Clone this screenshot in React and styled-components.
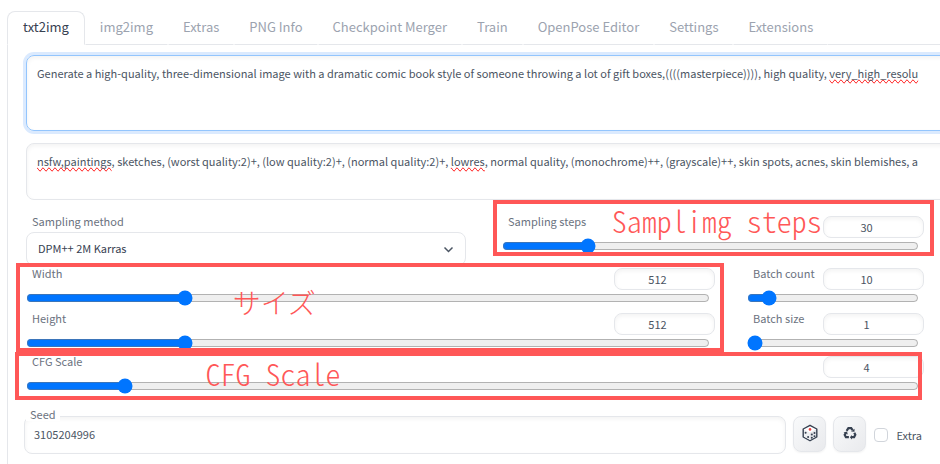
import React, {useState} from 'react';
import styled, {createGlobalStyle} from 'styled-components';

const GlobalStyle = createGlobalStyle`
    * {
        box-sizing: border-box;
    }

    body {
        margin: 0;
        background: #fff;
        color: #4b5563;
        font-family: "Noto Sans CJK JP", "Noto Sans", sans-serif;
        font-size: 11px;
        line-height: 16px;
        overflow: hidden;
    }

    button, input, select, textarea {
        font: inherit;
        color: inherit;
    }
`

const Page = styled.main`
    min-height: 100vh;
    padding: 11px 0 0 7px;
    display: flex;
    flex-direction: column;
`

const Tabs = styled.nav`
    display: flex;
    flex-shrink: 0;
    height: 34px;

    &:after {
        content: '';
        flex: 1;
        border-bottom: 1px solid #e5e7eb;
    }
`

const Tab = styled.button`
    padding: 0 14px 2px;
    border: 1px solid transparent;
    border-bottom-color: ${props => props.$active ? 'transparent' : '#e5e7eb'};
    background: none;
    color: #9ca3af;
    font-size: 13px;
    line-height: 20px;
    white-space: nowrap;

    ${props => props.$active && `
        padding: 0 15px 2px;
        border-color: #e5e7eb #e5e7eb transparent;
        border-radius: 8px 8px 0 0;
        color: #374151;
    `}
`

const Panel = styled.section`
    flex: 1;
    display: flex;
    flex-direction: column;
    padding: 10px 16px 10px 18px;
    border-left: 1px solid #e5e7eb;
`

const Prompts = styled.div`
    display: grid;
    gap: 12px;
    margin-right: -32px;
`

const PromptBox = styled.div`
    display: grid;
    height: ${props => props.$tall ? 76 : 57}px;
    border: 1px solid ${props => props.$focused ? '#93c5fd' : '#e5e7eb'};
    border-radius: 8px;
    box-shadow: ${props => props.$focused ? '0 0 0 3px #dbeafe, ' : ''}inset 0 2px 4px rgba(0, 0, 0, .05);

    > * {
        grid-area: 1 / 1;
        min-width: 0;
        padding: 9px 10px;
        white-space: pre;
        overflow: hidden;
    }
`

const PromptText = styled.textarea`
    border: 0;
    outline: 0;
    background: none;
    resize: none;
`

const Spelling = styled.div`
    color: transparent;

    mark {
        background: none;
        color: transparent;
        text-decoration-line: spelling-error;
    }
`

const Row = styled.div`
    display: grid;
    grid-template-columns: ${props => props.$columns};
    column-gap: ${props => props.$gap}px;
    align-items: start;
    margin-top: ${props => props.$top}px;
`

const Stack = styled.div`
    display: grid;
    gap: 7px;
`

const Marked = styled.div`
    position: relative;
`

const Frame = styled.div`
    position: absolute;
    inset: ${props => props.$inset};
    border: 4px solid #ff5757;
    pointer-events: none;
`

const Note = styled.span`
    position: absolute;
    top: ${props => props.$top}px;
    left: ${props => props.$left};
    color: #ff5757;
    font-size: ${props => props.$small ? 28 : 30}px;
    font-weight: 300;
    line-height: 32px;
    font-feature-settings: "hwid";
    white-space: pre;
    pointer-events: none;
`

const Label = styled.label`
    padding-left: 6px;
    color: #6b7280;
    line-height: 10px;
`

const SelectField = styled.div`
    display: grid;
    gap: 6px;
`

const SelectBox = styled.div`
    display: grid;
    align-items: center;

    > * {
        grid-area: 1 / 1;
    }

    svg {
        justify-self: end;
        margin-right: 11px;
        pointer-events: none;
    }
`

const Select = styled.select`
    width: 100%;
    height: 34px;
    padding: 0 11px 2px;
    border: 1px solid #e5e7eb;
    border-radius: 8px;
    background: #fff;
    color: #374151;
    appearance: none;
`

const SliderField = styled.div`
    display: grid;
`

const SliderHead = styled.div`
    display: flex;
    justify-content: space-between;
    align-items: flex-start;
`

const NumberInput = styled.input`
    width: 101px;
    height: 22px;
    padding: 0 14px 1px 0;
    border: 1px solid #e5e7eb;
    border-radius: 8px;
    box-shadow: inset 0 2px 4px rgba(0, 0, 0, .05);
    background: #fff;
    text-align: center;
    appearance: textfield;

    &::-webkit-inner-spin-button {
        display: none;
    }
`

const Range = styled.input`
    height: 16px;
    min-width: 0;
    margin: 0 5px 0 0;
    accent-color: #0075ff;
`

const SeedRow = styled.div`
    display: flex;
    align-items: flex-start;
    gap: 7px;
    margin: 22px 0 0 -2px;
`

const SeedField = styled.div`
    position: relative;
    flex: 1;
    display: grid;

    label {
        position: absolute;
        top: -9px;
        left: 2px;
        padding: 0 4px;
        background: #fff;
        color: #6b7280;
        line-height: 14px;
    }
`

const SeedInput = styled.input`
    height: 38px;
    padding: 0 9px 2px;
    border: 1px solid #e5e7eb;
    border-radius: 8px;
    box-shadow: inset 0 2px 4px rgba(0, 0, 0, .05);
`

const ToolButton = styled.button`
    display: grid;
    place-items: center;
    width: 33px;
    height: 36px;
    padding: 0 0 2px;
    border: 1px solid #e5e7eb;
    border-radius: 8px;
    background: linear-gradient(to bottom right, #f9fafb, #e9eaed);
    box-shadow: 0 1px 2px rgba(0, 0, 0, .05);
`

const Extra = styled.label`
    display: flex;
    align-items: center;
    gap: 8px;
    height: 38px;
    padding: 0 2px 0 1px;
`

const Checkbox = styled.input`
    width: 14px;
    height: 14px;
    margin: 0;
    border: 1px solid #d1d5db;
    border-radius: 4px;
    background: #fff;
    appearance: none;

    &:checked {
        background: #0075ff;
    }
`

const tabs = ['txt2img', 'img2img', 'Extras', 'PNG Info', 'Checkpoint Merger', 'Train', 'OpenPose Editor', 'Settings', 'Extensions']

const promptText = 'Generate a high-quality, three-dimensional image with a dramatic comic book style of someone throwing a lot of gift boxes,((((masterpiece)))), high quality, very_high_resolu'
const negativeText = 'nsfw,paintings, sketches, (worst quality:2)+, (low quality:2)+, (normal quality:2)+, lowres, normal quality, (monochrome)++, (grayscale)++, skin spots, acnes, skin blemishes, a'

const misspelled = /(nsfw,paintings|lowres|very_high_resolu)/

const Chevron = () => (
    <svg width="13" height="13" viewBox="0 0 13 13" fill="none" stroke="#4b5563" strokeWidth="1.5">
        <path d="M2.5 4.5 6.5 8.5 10.5 4.5"/>
    </svg>
)

const Dice = () => (
    <svg width="16" height="18" viewBox="0 0 16 18">
        <path d="M8 1.3 14.8 5V13L8 16.7 1.2 13V5Z" fill="#fff" stroke="#374151" strokeWidth="1.4" strokeLinejoin="round"/>
        <path d="M2 5.6 8 8.8V15.9L2 12.6Z" fill="#eef0f2"/>
        <path d="M14 5.6 8 8.8V15.9L14 12.6Z" fill="#e2e4e8"/>
        <circle cx="8" cy="5.4" r="1.3" fill="#ef4444"/>
        <g fill="#374151">
            <circle cx="3.6" cy="8.7" r="1"/>
            <circle cx="6.1" cy="13" r="1"/>
            <circle cx="9.8" cy="10.6" r="1"/>
            <circle cx="12.5" cy="9" r="1"/>
            <circle cx="9.8" cy="13.8" r="1"/>
            <circle cx="12.5" cy="12.2" r="1"/>
        </g>
    </svg>
)

const Recycle = () => (
    <svg width="14" height="14" viewBox="0 0 14 14" fill="none" stroke="#374151" strokeWidth="2.2">
        <path d="M3.6 4.8 5.4 2.1H8.2L9.6 4.2"/>
        <path d="M11.3 6.8 12.3 8.8 11.1 11.2H8.6"/>
        <path d="M5.9 11.2H2.9L1.7 8.9 2.8 7"/>
        <path d="M11.5 2.7V5.8L8 5.4ZM9 9V13.4L6.8 11.2ZM.5 6.6 4 5.5 4.8 8.6Z" fill="#374151" stroke="none"/>
    </svg>
)

const Prompt = ({name, text, tall, focused}) => {

    const [value, setValue] = useState(text)

    return (
        <PromptBox $tall={tall} $focused={focused}>
            <Spelling aria-hidden="true">
                {value.split(misspelled).map((part, i) => i % 2 ? <mark key={i}>{part}</mark> : part)}
            </Spelling>
            <PromptText aria-label={name} spellCheck={false} value={value} onChange={e => setValue(e.target.value)}/>
        </PromptBox>
    )
}

const Slider = ({id, label, start, min, max, step = 1}) => {

    const [value, setValue] = useState(start)
    const change = e => setValue(e.target.value)

    return (
        <SliderField>
            <SliderHead>
                <Label htmlFor={id}>{label}</Label>
                <NumberInput id={id} type="number" min={min} max={max} step={step} value={value} onChange={change}/>
            </SliderHead>
            <Range type="range" aria-label={label} min={min} max={max} step={step} value={value} onChange={change}/>
        </SliderField>
    )
}

const App = () => {

    const [active, setActive] = useState('txt2img')

    return (
        <Page>
            <GlobalStyle/>
            <Tabs>
                {tabs.map(tab => (
                    <Tab key={tab} type="button" $active={tab === active} onClick={() => setActive(tab)}>{tab}</Tab>
                ))}
            </Tabs>
            <Panel>
                <Prompts>
                    <Prompt name="Prompt" text={promptText} tall focused/>
                    <Prompt name="Negative prompt" text={negativeText}/>
                </Prompts>
                <Row $columns="440fr 422fr" $gap={36} $top={16}>
                    <SelectField>
                        <Label htmlFor="sampler">Sampling method</Label>
                        <SelectBox>
                            <Select id="sampler">
                                <option>DPM++ 2M Karras</option>
                                <option>Euler a</option>
                            </Select>
                            <Chevron/>
                        </SelectBox>
                    </SelectField>
                    <Marked>
                        <Slider id="steps" label="Sampling steps" start={30} min={1} max={150}/>
                        <Frame $inset="-16px -10px -2px -9px"/>
                        <Note $top={-12} $left="26%">Samplimg steps</Note>
                    </Marked>
                </Row>
                <Row $columns="689fr 177fr" $gap={32} $top={2}>
                    <Marked>
                        <Stack>
                            <Slider id="width" label="Width" start={512} min={64} max={2048} step={8}/>
                            <Slider id="height" label="Height" start={512} min={64} max={2048} step={8}/>
                        </Stack>
                        <Frame $inset="-5px -9px -1px -10px"/>
                        <Note $top={18} $left="30%" $small>サイズ</Note>
                    </Marked>
                    <Stack>
                        <Slider id="batch-count" label="Batch count" start={10} min={1} max={100}/>
                        <Slider id="batch-size" label="Batch size" start={1} min={1} max={8}/>
                    </Stack>
                </Row>
                <Row $columns="1fr" $gap={0} $top={5}>
                    <Marked>
                        <Slider id="cfg" label="CFG Scale" start={4} min={1} max={30}/>
                        <Frame $inset="-4px 2px -6px -11px"/>
                        <Note $top={1} $left="20%">CFG Scale</Note>
                    </Marked>
                </Row>
                <SeedRow>
                    <SeedField>
                        <SeedInput id="seed" type="text" defaultValue="3105204996"/>
                        <label htmlFor="seed">Seed</label>
                    </SeedField>
                    <ToolButton type="button" aria-label="Random seed"><Dice/></ToolButton>
                    <ToolButton type="button" aria-label="Reuse seed"><Recycle/></ToolButton>
                    <Extra>
                        <Checkbox type="checkbox"/>
                        Extra
                    </Extra>
                </SeedRow>
            </Panel>
        </Page>
    );
}

export default App;
